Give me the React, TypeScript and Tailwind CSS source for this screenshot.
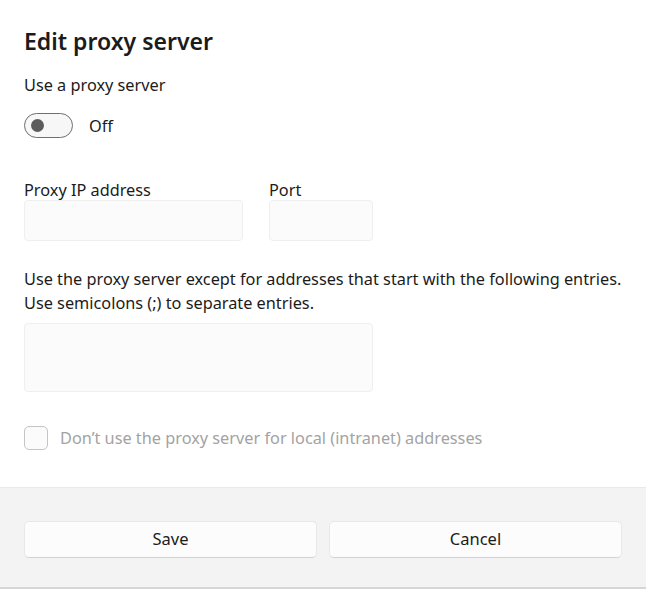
export default function App() {
  return (
    <div
      className="w-[646px] h-[589px] bg-white flex flex-col text-[#1b1b1b] overflow-hidden"
      style={{ fontFamily: '"Noto Sans", "Open Sans", sans-serif' }}
    >
      <div className="flex-1 px-6">
        <h1 className="mt-[25px] text-[23px] leading-[32px] font-semibold">Edit proxy server</h1>

        <div className="mt-[16px] text-[16.3px] leading-[24px]">Use a proxy server</div>

        <div className="mt-[16px] flex items-center gap-[16px] h-[25px]">
          <div className="w-[49px] h-[25px] rounded-full border border-[#6e6e6e] bg-[#f7f7f7] flex items-center pl-[6px]">
            <div className="w-[13px] h-[13px] rounded-full bg-[#5c5c5c]" />
          </div>
          <span className="text-[16.3px] leading-[24px]">Off</span>
        </div>

        <div className="mt-[40px] flex gap-[26px]">
          <div className="flex flex-col">
            <label className="text-[16.3px] leading-[24px]">Proxy IP address</label>
            <div className="mt-[-2px] w-[219px] h-[41px] bg-[#fbfbfb] border border-[#efefef] rounded-[4px]" />
          </div>
          <div className="flex flex-col">
            <label className="text-[16.3px] leading-[24px]">Port</label>
            <div className="mt-[-2px] w-[104px] h-[41px] bg-[#fbfbfb] border border-[#efefef] rounded-[4px]" />
          </div>
        </div>

        <p className="mt-[26px] text-[16.3px] leading-[24px]">
          Use the proxy server except for addresses that start with the following entries.
          <br />
          Use semicolons (;) to separate entries.
        </p>

        <div className="mt-[8px] w-[349px] h-[69px] bg-[#fbfbfb] border border-[#efefef] rounded-[4px]" />

        <div className="mt-[34px] flex items-center gap-[12px]">
          <div className="w-[24px] h-[24px] rounded-[5px] border border-[#c4c4c4] bg-[#fbfbfb]" />
          <span className="text-[16.3px] leading-[24px] text-[#a3a3a3]">
            Don’t use the proxy server for local (intranet) addresses
          </span>
        </div>
      </div>

      <div className="h-[102px] bg-[#f3f3f3] border-t border-[#e9e9e9] border-b-2 border-b-[#d6d6d6] px-6 pt-[33px] flex gap-[12px]">
        <button className="flex-1 h-[37px] bg-[#fcfcfc] border border-[#e8e8e8] border-b-[#d2d2d2] rounded-[5px] text-[16.5px] text-[#1b1b1b]">
          Save
        </button>
        <button className="flex-1 h-[37px] bg-[#fcfcfc] border border-[#e8e8e8] border-b-[#d2d2d2] rounded-[5px] text-[16.5px] text-[#1b1b1b]">
          Cancel
        </button>
      </div>
    </div>
  );
}
